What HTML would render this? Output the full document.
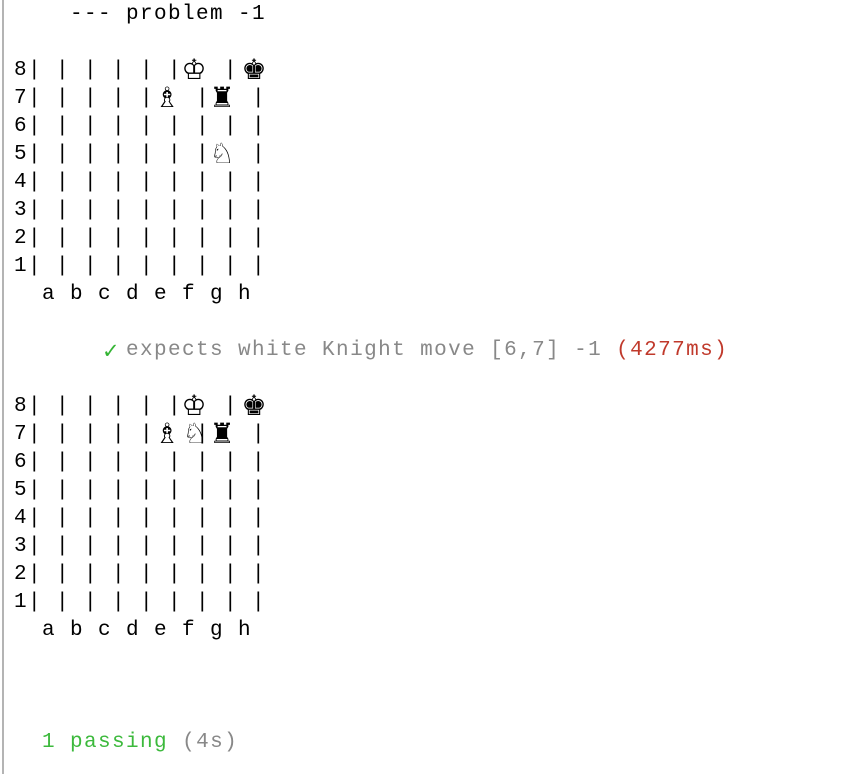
<!DOCTYPE html>
<html><head><meta charset="utf-8"><style>
html,body{margin:0;padding:0;background:#fff;width:841px;height:774px;overflow:hidden;position:relative}
pre{position:absolute;left:0;top:1px;margin:0;font-family:"Liberation Mono",monospace;font-size:21px;letter-spacing:1.4px;line-height:28px;color:#000}
.bar{position:absolute;left:2px;top:0;width:2px;height:774px;background:#b4b4b4}
.p{position:absolute;font-family:"DejaVu Sans",sans-serif;font-size:28px;line-height:28px;width:30px;text-align:center;margin-left:-15px}
.g{color:#888}.r{color:#c0392b}.ok{color:#35b535}.pass{color:#3cb93c}
.ck{position:absolute;left:102px;top:337px;font-family:"DejaVu Sans",sans-serif;font-size:21px;line-height:28px;color:#35b535}
</style></head><body>
<div class="bar"></div>
<pre>     --- problem -1

 8| | | | | |   |
 7| | | | |   |   |
 6| | | | | | | | |
 5| | | | | | |   |
 4| | | | | | | | |
 3| | | | | | | | |
 2| | | | | | | | |
 1| | | | | | | | |
   a b c d e f g h

         <span class="g">expects white Knight move [6,7] -1 </span><span class="r">(4277ms)</span>

 8| | | | | |   |
 7| | | | |   |   |
 6| | | | | | | | |
 5| | | | | | | | |
 4| | | | | | | | |
 3| | | | | | | | |
 2| | | | | | | | |
 1| | | | | | | | |
   a b c d e f g h



   <span class="pass">1 passing</span> <span class="g">(4s)</span></pre>
<div class="ck">✓</div>
<div class="p" style="left:194px;top:56px">♔</div>
<div class="p" style="left:254px;top:56px">♚</div>
<div class="p" style="left:167px;top:84px">♗</div>
<div class="p" style="left:222px;top:84px">♜</div>
<div class="p" style="left:222px;top:140px">♘</div>
<div class="p" style="left:194px;top:392px">♔</div>
<div class="p" style="left:254px;top:392px">♚</div>
<div class="p" style="left:167px;top:420px">♗</div>
<div class="p" style="left:195px;top:420px">♘</div>
<div class="p" style="left:222px;top:420px">♜</div>
</body></html>
